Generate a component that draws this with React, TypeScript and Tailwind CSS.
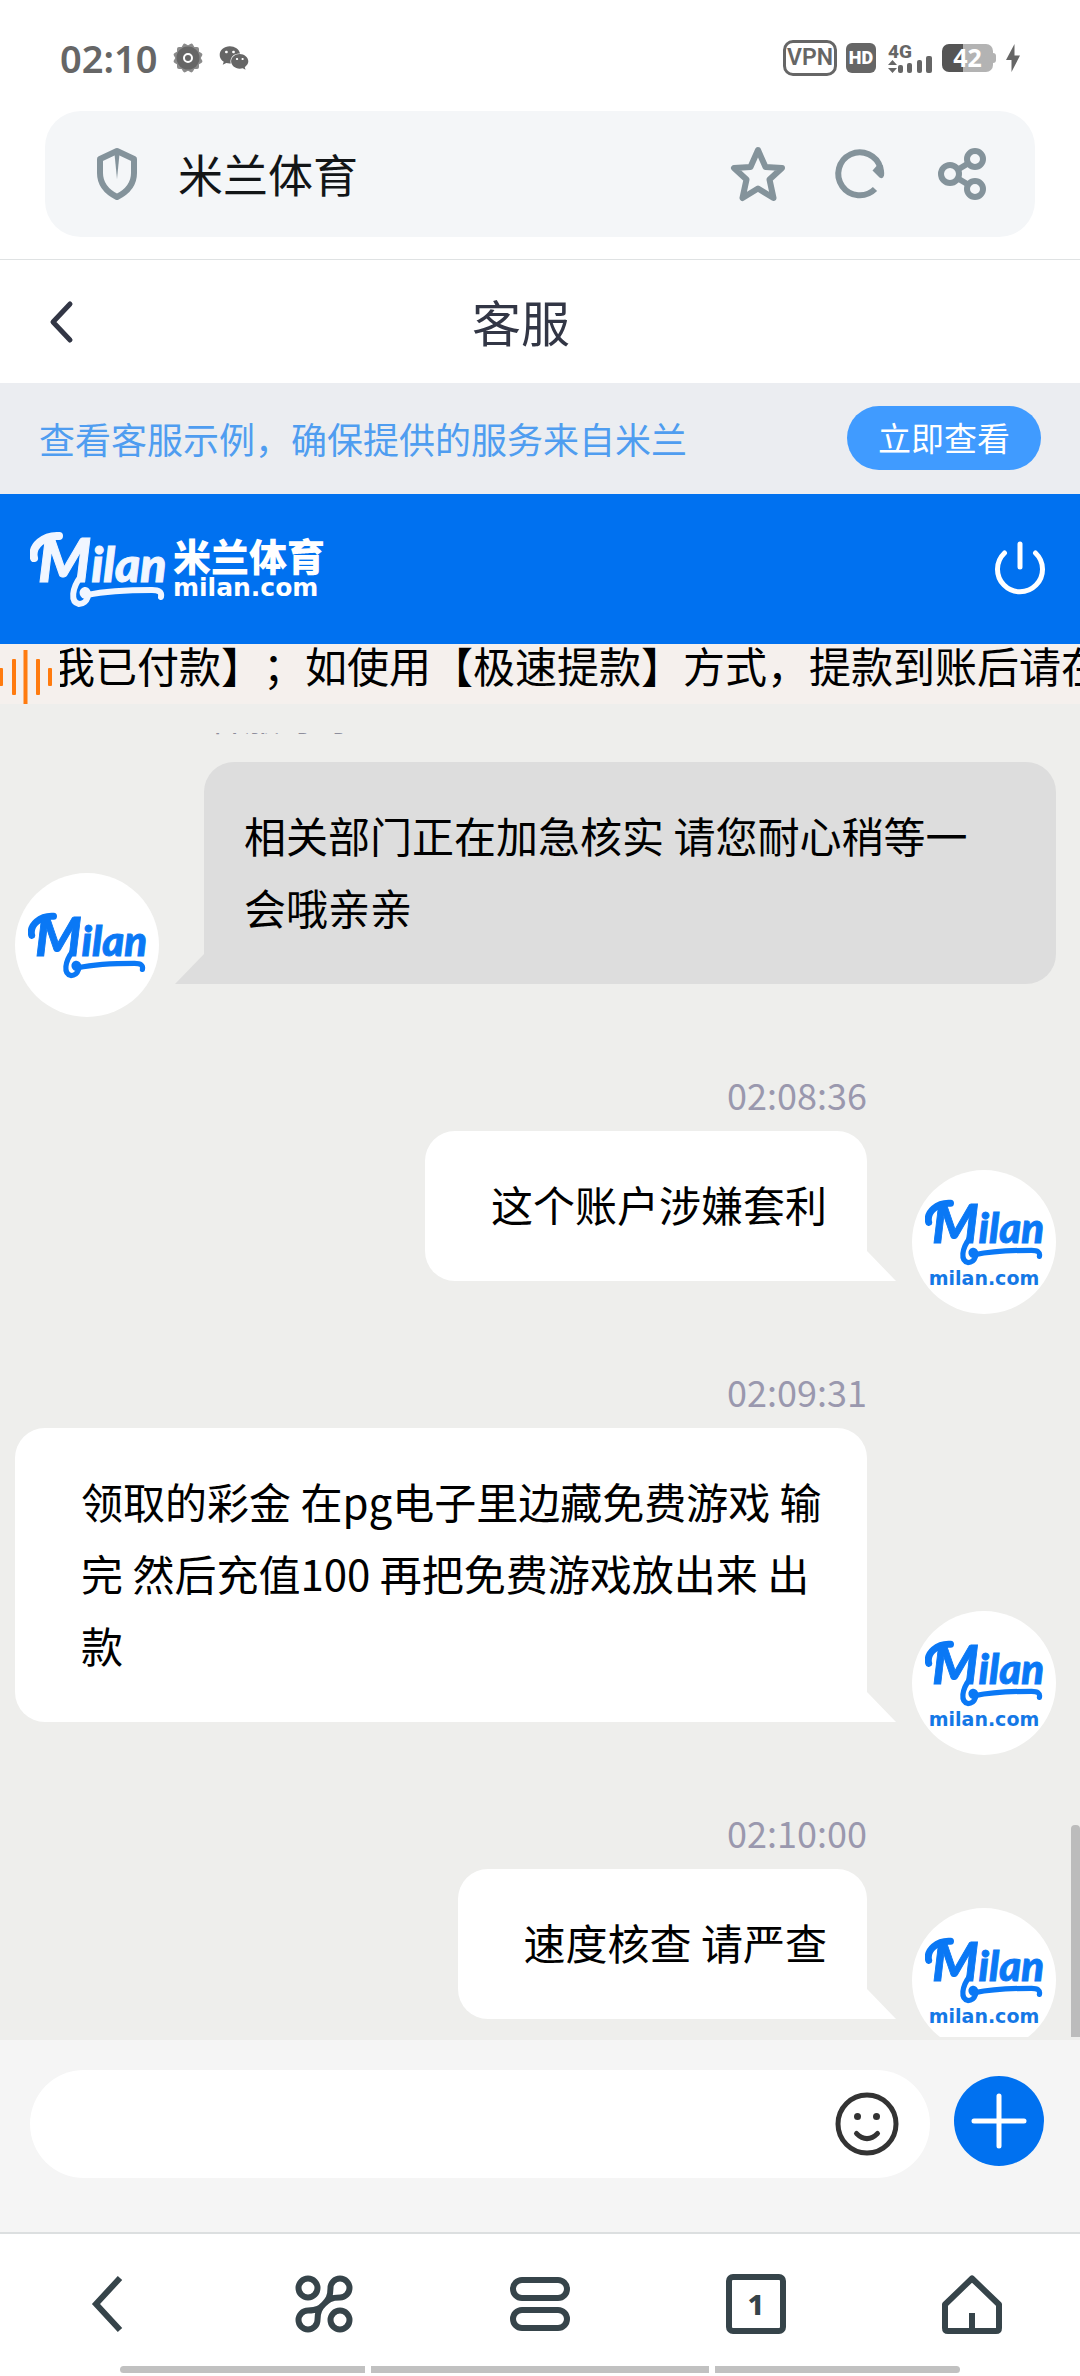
import React from 'react';
import { FaWeixin } from 'react-icons/fa';

type Message = {
  id: number;
  side: 'agent' | 'user';
  label: string;
  text: string;
};

const messages: Message[] = [
  { id: 1, side: 'agent', label: '客服 小小', text: '相关部门正在加急核实 请您耐心稍等一会哦亲亲' },
  { id: 2, side: 'user', label: '02:08:36', text: '这个账户涉嫌套利' },
  { id: 3, side: 'user', label: '02:09:31', text: '领取的彩金 在pg电子里边藏免费游戏 输完 然后充值100 再把免费游戏放出来 出款' },
  { id: 4, side: 'user', label: '02:10:00', text: '速度核查 请严查' },
];

function MilanMark({ className, tone }: { className: string; tone: 'light' | 'blue' }) {
  const color = tone === 'light' ? '#f1f6ff' : '#0a78f5';
  return (
    <svg viewBox="0 0 136 78" className={className} role="img" aria-label="Milan">
      <g fill="none" stroke={color} strokeLinecap="round" strokeLinejoin="round">
        <path d="M4 28C1 16 14 5 29 6" strokeWidth="8" />
        <path d="M51 46C42 58 40 72 49 74C58 74 61 61 55 60C51 61 52 66 57 66" strokeWidth="6" />
        <path d="M57 65C76 61 104 60 122 60C129 60 132 62 131 67" strokeWidth="6" />
      </g>
      <g
        fill={color}
        stroke={color}
        fontFamily="Lato, 'Open Sans', sans-serif"
        fontWeight="900"
        fontStyle="italic"
      >
        <text x="8" y="52" strokeWidth="1">
          <tspan fontSize="60">M</tspan>
          <tspan fontSize="48">ilan</tspan>
        </text>
      </g>
    </svg>
  );
}

function StatusBar() {
  return (
    <div className="flex h-[111px] shrink-0 items-center justify-between pt-1 pr-[60px] pl-[60px] text-[#666]">
      <div className="flex items-center gap-4">
        <span className="font-['Noto_Sans'] text-[38px] leading-none font-semibold">02:10</span>
        <svg viewBox="0 0 30 30" className="h-[30px] w-[30px]" aria-hidden="true">
          <g fill="#8b8b8b">
            {[0, 30, 60].map((a) => (
              <rect key={a} x="4" y="4" width="22" height="22" rx="2" transform={`rotate(${a} 15 15)`} />
            ))}
          </g>
          <circle cx="15" cy="15" r="11.5" fill="#666" />
          <circle cx="15" cy="15" r="4" fill="#666" stroke="#fff" strokeWidth="2" />
        </svg>
        <FaWeixin className="h-[28px] w-[30px]" />
      </div>
      <div className="flex items-center font-['Roboto']">
        <span className="flex h-[36px] w-[54px] items-center justify-center rounded-[10px] border-3 border-[#666] text-[23px] leading-none font-semibold">
          VPN
        </span>
        <span className="ml-[9px] flex h-[30px] w-[30px] items-center justify-center rounded-[6px] bg-[#666] text-[18px] leading-none font-black text-white">
          HD
        </span>
        <svg viewBox="0 0 44 36" className="ml-3 h-[36px] w-[44px]" aria-hidden="true">
          <text x="0" y="18" fontFamily="Roboto, sans-serif" fontWeight="800" fontSize="19" fill="#666">4G</text>
          <g fill="#666">
            <path d="M0 25l4.500-5 4.500 5zM0 28h9l-4.500 5z" />
            <rect x="10" y="25" width="5" height="8" rx="2" />
            <rect x="19" y="23" width="5" height="10" rx="2" />
            <rect x="29" y="20" width="5" height="13" rx="2" />
            <rect x="38" y="16" width="6" height="17" rx="2" />
          </g>
        </svg>
        <span className="ml-[10px] flex items-center">
          <span className="flex h-[28px] w-[51px] items-center justify-center rounded-[7px] bg-linear-to-r from-[#555] from-42% to-[#b3b3b3] to-42% font-['Noto_Sans'] text-[25px] leading-none font-bold text-white">
            42
          </span>
          <span className="h-[10px] w-[3px] rounded-r-[3px] bg-[#b3b3b3]" />
        </span>
        <svg viewBox="0 0 14 28" className="ml-[10px] h-[28px] w-[14px]" aria-hidden="true">
          <path d="M8.500 0L0 16h5.500L5.500 28L14 11.500H8.500z" fill="#666" />
        </svg>
      </div>
    </div>
  );
}

function AddressBar() {
  return (
    <div className="mx-[45px] mb-[22px] flex h-[126px] shrink-0 items-center rounded-[36px] bg-[#f4f6f8] pr-[43px] pl-[52px] text-[#84939b]">
      <svg viewBox="0 0 40 54" className="h-[54px] w-[40px]" aria-hidden="true">
        <path d="M20 4L37 12V26C37 37 30 45 20 50C10 45 3 37 3 26V12Z" fill="none" stroke="currentColor" strokeWidth="6" strokeLinejoin="round" />
        <path d="M17.500 7H22.500L20 32z" fill="currentColor" />
      </svg>
      <span className="ml-[41px] flex-1 pb-[2px] text-[45px] leading-none text-[#121517]">米兰体育</span>
      <div className="flex items-center gap-[42px]">
        <button type="button" aria-label="收藏">
          <svg viewBox="0 0 60 60" className="h-[60px] w-[60px]">
            <path
              d="M30 6L37.500 23L54 24L41.500 35.500L45.500 54L30 44.500L14.500 54L18.500 35.500L6 24L22.500 23Z"
              fill="none"
              stroke="currentColor"
              strokeWidth="6"
              strokeLinejoin="round"
            />
          </svg>
        </button>
        <button type="button" aria-label="刷新">
          <svg viewBox="0 0 60 60" className="h-[60px] w-[60px]">
            <path d="M45 45A21.500 21.500 0 1 1 50.500 24" fill="none" stroke="currentColor" strokeWidth="6" />
            <path d="M42.500 26.500L47 21.500L52.500 21C54 25 54.500 29 54 31.500Q53 35.500 49.500 33.500Z" fill="currentColor" />
          </svg>
        </button>
        <button type="button" aria-label="分享">
          <svg viewBox="0 0 60 60" className="h-[60px] w-[60px]" fill="none" stroke="currentColor" strokeWidth="6">
            <circle cx="18" cy="30" r="9" />
            <circle cx="43" cy="15" r="8" />
            <circle cx="43" cy="45" r="8" />
            <path d="M26 25.500L36 19.500M26 34.500L36 40.500" />
          </svg>
        </button>
      </div>
    </div>
  );
}

function Avatar({ withDomain }: { withDomain: boolean }) {
  return (
    <div className={`-mb-[33px] flex h-36 w-36 shrink-0 flex-col items-center rounded-full bg-white ${withDomain ? 'pt-7' : 'pt-[38px]'}`}>
      <MilanMark tone="blue" className="h-[68px] w-[119px]" />
      {withDomain && (
        <span className="mt-[2px] font-['DejaVu_Sans'] text-[19px] leading-[20px] font-bold text-[#1478e6]">milan.com</span>
      )}
    </div>
  );
}

function Bubble({ message }: { message: Message }) {
  if (message.side === 'agent') {
    return (
      <div className="flex items-end pr-6 pl-[15px]">
        <Avatar withDomain={false} />
        <div className="ml-[16px] h-0 w-0 shrink-0 border-b-[30px] border-l-[29px] border-b-[#ddd] border-l-transparent" />
        <p className="flex-1 rounded-[30px] rounded-bl-none bg-[#ddd] pt-[37px] pr-[66px] pb-[41px] pl-10 text-[42px] leading-[72px]">
          {message.text}
        </p>
      </div>
    );
  }
  return (
    <div className="flex items-end justify-end pr-6 pl-[15px]">
      <p className="rounded-[30px] rounded-br-none bg-white pt-[37px] pr-10 pb-[41px] pl-[66px] text-[42px] leading-[72px]">
        {message.text}
      </p>
      <div className="mr-[16px] h-0 w-0 shrink-0 border-r-[29px] border-b-[30px] border-r-transparent border-b-white" />
      <Avatar withDomain />
    </div>
  );
}

function Chat() {
  return (
    <main className="relative mt-[29px] mb-[3px] min-h-0 flex-1 overflow-hidden">
      {messages.map((m) =>
        m.side === 'agent' ? (
          <section key={m.id} className="-mt-[45px]">
            <div className="mb-5 pl-[208px] text-[36px] leading-[54px] text-[#8e8e9c]">{m.label}</div>
            <Bubble message={m} />
          </section>
        ) : (
          <section key={m.id} className="mt-[83px]">
            <div className="mb-[10px] pr-[213px] text-right text-[36px] leading-[54px] text-[#9a98ae]">{m.label}</div>
            <Bubble message={m} />
          </section>
        ),
      )}
      <div className="absolute right-0 bottom-0 h-[212px] w-[9px] rounded-t-[4px] bg-[#bcbcbc]" />
    </main>
  );
}

function BottomNav() {
  return (
    <nav className="shrink-0 border-t-2 border-[#dcdfe0] bg-white text-[#36444a]">
      <div className="grid h-[132px] grid-cols-5 items-center justify-items-center pt-2">
        <button type="button" aria-label="后退">
          <svg viewBox="0 0 60 60" className="h-[60px] w-[60px]" fill="none" stroke="currentColor" strokeWidth="6">
            <path d="M42 4L18 30L42 56" />
          </svg>
        </button>
        <button type="button" aria-label="工具">
          <svg viewBox="0 0 60 60" className="h-[60px] w-[60px]" fill="none" stroke="currentColor" strokeWidth="6">
            <circle cx="14" cy="14" r="9.500" />
            <circle cx="46" cy="46" r="9.500" />
            <path d="M30 30C34 26 36.500 23.500 46 23.500A9.500 9.500 0 1 0 36.500 14C36.500 23 34 26 30 30C26 34 23.500 36.500 14 36.500A9.500 9.500 0 1 0 23.500 46C23.500 37 26 34 30 30Z" strokeLinejoin="round" />
          </svg>
        </button>
        <button type="button" aria-label="菜单">
          <svg viewBox="0 0 60 60" className="h-[60px] w-[60px]" fill="none" stroke="currentColor" strokeWidth="6">
            <rect x="3" y="6" width="54" height="18" rx="9" />
            <rect x="3" y="36" width="54" height="18" rx="9" />
          </svg>
        </button>
        <button
          type="button"
          aria-label="标签页 1"
          className="flex h-[60px] w-[60px] items-center justify-center rounded-[7px] border-6 border-[#36444a] pb-[2px] font-['Noto_Sans'] text-[29px] leading-none font-extrabold"
        >
          1
        </button>
        <button type="button" aria-label="主页">
          <svg viewBox="0 0 60 60" className="h-[60px] w-[60px]" fill="none" stroke="currentColor" strokeWidth="6">
            <path d="M30 4.500L57 30.500V54Q57 57 54 57H6Q3 57 3 54V30.500Z" strokeLinejoin="round" />
            <path d="M30 39V57" />
          </svg>
        </button>
      </div>
      <div className="mx-auto mb-[3px] grid w-7/9 grid-cols-[245fr_338fr_245fr] gap-[6px]">
        <span className="h-[7px] rounded-l-full bg-[#c1c1c1]" />
        <span className="h-[7px] bg-[#c1c1c1]" />
        <span className="h-[7px] rounded-r-full bg-[#c1c1c1]" />
      </div>
    </nav>
  );
}

export default function App() {
  return (
    <div className="flex h-screen flex-col overflow-hidden bg-[#eeeeec] font-['Noto_Sans_CJK_SC',sans-serif] text-black">
      <div className="flex shrink-0 flex-col border-b border-[#dfe2e3] bg-white">
        <StatusBar />
        <AddressBar />
      </div>

      <header className="flex h-[123px] shrink-0 items-center bg-white pr-[114px] pl-12 text-[#323645]">
        <button type="button" aria-label="返回">
          <svg viewBox="0 0 28 44" className="h-[44px] w-[28px]" fill="none" stroke="currentColor" strokeWidth="5" strokeLinecap="round" strokeLinejoin="round">
            <path d="M22 4L5 22L22 40" />
          </svg>
        </button>
        <h1 className="flex-1 pb-[3px] text-center text-[49px] leading-none">客服</h1>
      </header>

      <div className="flex h-[111px] shrink-0 items-center justify-between bg-[#ebedf1] pr-[39px] pb-[2px] pl-[39px]">
        <span className="text-[36px] leading-none text-[#4f9df0]">查看客服示例，确保提供的服务来自米兰</span>
        <button type="button" className="h-16 rounded-full bg-[#409bff] px-[31px] text-[33px] leading-none text-white">
          立即查看
        </button>
      </div>

      <div className="flex h-[150px] shrink-0 items-center justify-between bg-[#0071f0] pr-[30px] pl-[30px]">
        <div className="flex items-center gap-[7px]">
          <MilanMark tone="light" className="h-[78px] w-[136px]" />
          <div className="flex flex-col text-white">
            <span className="text-[38px] leading-[38px] font-black">米兰体育</span>
            <span className="font-['DejaVu_Sans'] text-[25px] leading-[28px] font-bold">milan.com</span>
          </div>
        </div>
        <button type="button" aria-label="结束会话">
          <svg viewBox="0 0 60 60" className="h-[60px] w-[60px]" fill="none" stroke="#fff" strokeWidth="5" strokeLinecap="round">
            <path d="M14.500 14A22.500 22.500 0 1 0 45.500 14" />
            <path d="M30 5V28" />
          </svg>
        </button>
      </div>

      <div className="flex h-[60px] shrink-0 bg-[#f5f0ed]">
        <svg viewBox="0 0 60 60" className="h-[60px] w-[60px] shrink-0" aria-hidden="true">
          <g fill="#ff7b0f">
            <rect x="-1" y="24" width="4" height="18" rx="1" />
            <rect x="12" y="15" width="4" height="36" rx="1" />
            <rect x="23.500" y="6" width="4" height="54" />
            <rect x="36" y="15" width="4" height="36" rx="1" />
            <rect x="48" y="24" width="4" height="18" rx="1" />
          </g>
        </svg>
        <div className="min-w-0 flex-1 overflow-hidden">
          <p className="-ml-[7px] text-[42px] leading-[42px] whitespace-nowrap [text-spacing-trim:space-all]">
            我已付款】；如使用【极速提款】方式，提款到账后请在
          </p>
        </div>
      </div>

      <Chat />

      <form className="flex h-[192px] shrink-0 items-start gap-6 bg-[#f5f5f5] pt-[30px] pr-9 pl-[30px]" onSubmit={(e) => e.preventDefault()}>
        <div className="flex h-[108px] flex-1 items-center rounded-full bg-white pr-[30px] pl-12">
          <input type="text" aria-label="输入消息" className="h-full min-w-0 flex-1 bg-transparent text-[42px] outline-none" />
          <button type="button" aria-label="表情">
            <svg viewBox="0 0 66 66" className="h-[66px] w-[66px]" fill="none" stroke="#333" strokeWidth="5">
              <circle cx="33" cy="33" r="29" />
              <path d="M22.500 42.500Q33 53 43.500 42.500" strokeLinecap="round" />
              <circle cx="23.500" cy="25.500" r="3.500" fill="#333" stroke="none" />
              <circle cx="42.500" cy="25.500" r="3.500" fill="#333" stroke="none" />
            </svg>
          </button>
        </div>
        <button type="button" aria-label="更多" className="mt-[6px]">
          <svg viewBox="0 0 90 90" className="h-[90px] w-[90px]">
            <circle cx="45" cy="45" r="45" fill="#0071f0" />
            <path d="M45 20V70M20 45H70" stroke="#fff" strokeWidth="5" strokeLinecap="round" />
          </svg>
        </button>
      </form>

      <BottomNav />
    </div>
  );
}
